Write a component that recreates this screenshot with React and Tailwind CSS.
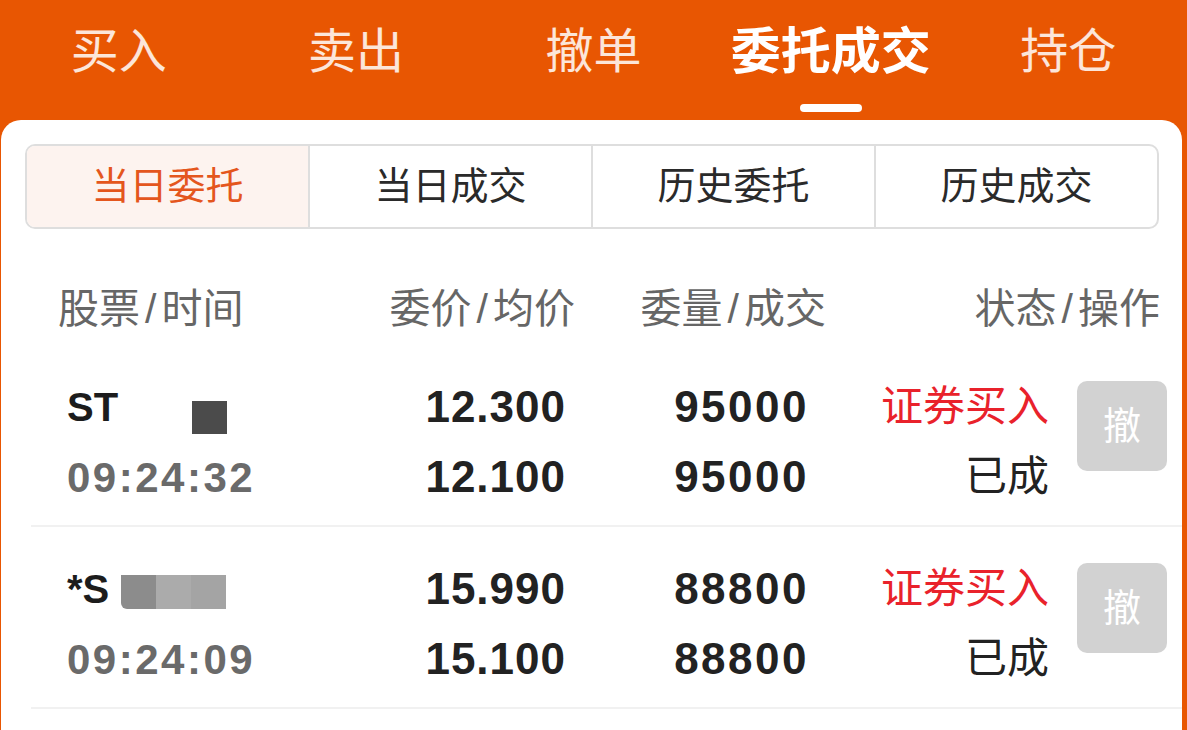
import { useState } from 'react';

const FONT = { fontFamily: '"Liberation Sans", "Noto Sans CJK SC", sans-serif' };

const topTabs = ['买入', '卖出', '撤单', '委托成交', '持仓'];
const subTabs = ['当日委托', '当日成交', '历史委托', '历史成交'];

const orders = [
  { code: 'ST', mask: 'dark', time: '09:24:32', price: '12.300', avg: '12.100', qty: '95000', deal: '95000' },
  { code: '*S', mask: 'light', time: '09:24:09', price: '15.990', avg: '15.100', qty: '88800', deal: '88800' },
];

// 打码块
const Mask = ({ type }) => {
  if (type === 'dark') {
    return <div className="ml-[74px] mt-[14px] w-[35px] h-[33px] bg-[#4b4b4b]" />;
  }
  return (
    <div className="flex mt-[6px] ml-[12px]">
      <div className="w-[35px] h-[34px] bg-[#8c8c8c] rounded-bl-[6px]" />
      <div className="w-[35px] h-[34px] bg-[#ababab]" />
      <div className="w-[35px] h-[34px] bg-[#a4a4a4]" />
    </div>
  );
};

const HeadCell = ({ a, b, className }) => (
  <div className={className}>
    {a}
    <span className="mx-[5px]">/</span>
    {b}
  </div>
);

const OrderRow = ({ item }) => (
  <div className="h-[180px] flex pl-[36px]">
    <div className="w-[264px] pt-[42px]">
      <div className="flex items-start h-[42px]">
        <span className="text-[40px] leading-[40px] font-bold text-[#1c1c1c]">{item.code}</span>
        <Mask type={item.mask} />
      </div>
      <div className="mt-[28px] text-[42px] leading-[42px] text-[#6a6a6a] font-bold tracking-[2.5px]">{item.time}</div>
    </div>
    <div className="w-[235px] pt-[40px] text-right text-[44px] leading-[44px] font-bold text-[#222] tracking-[1px]">
      <div>{item.price}</div>
      <div className="mt-[26px]">{item.avg}</div>
    </div>
    <div className="w-[243px] pt-[40px] text-right text-[44px] leading-[44px] font-bold text-[#222] tracking-[2.5px]">
      <div>{item.qty}</div>
      <div className="mt-[26px]">{item.deal}</div>
    </div>
    <div className="w-[240px] pt-[41px] text-right text-[42px] leading-[42px]">
      <div className="text-[#e9222b]">证券买入</div>
      <div className="mt-[28px] text-[#222]">已成</div>
    </div>
    <div className="pl-[28px] pt-[36px]">
      <button className="w-[90px] h-[90px] rounded-[10px] bg-[#d2d2d2] text-white text-[38px] flex items-center justify-center">
        撤
      </button>
    </div>
  </div>
);

export default function App() {
  const [tab, setTab] = useState(3);
  const [sub, setSub] = useState(0);

  return (
    <div className="w-[1187px] h-[730px] overflow-hidden bg-[#e85602]" style={FONT}>
      {/* 顶部导航 */}
      <div className="h-[120px] flex">
        {topTabs.map((t, i) => (
          <button
            key={t}
            onClick={() => setTab(i)}
            className="w-[237.4px] flex flex-col items-center pt-[25px]"
          >
            <span
              className={
                i === tab
                  ? 'text-[50px] leading-[54px] font-semibold text-white'
                  : 'text-[48px] leading-[54px] text-white/85'
              }
            >
              {t}
            </span>
            {i === tab && <span className="mt-[25px] w-[62px] h-[8px] rounded-full bg-white" />}
          </button>
        ))}
      </div>

      {/* 内容卡片 */}
      <div className="bg-white rounded-t-[20px] ml-[1px] mr-[5px] h-[610px]">
        <div className="pt-[24px] pl-[24px] pr-[23px]">
          <div className="flex h-[85px] border-2 border-[#dedede] rounded-[10px] overflow-hidden">
            {subTabs.map((t, i) => (
              <button
                key={t}
                onClick={() => setSub(i)}
                className={
                  'flex-1 flex items-center justify-center text-[38px] ' +
                  (i > 0 ? 'border-l-2 border-[#dedede] ' : '') +
                  (i === sub ? 'bg-[#fdf3ef] text-[#e4561d]' : 'text-[#2a2a2a]')
                }
              >
                {t}
              </button>
            ))}
          </div>
        </div>

        {/* 表头 */}
        <div className="flex pl-[57px] mt-[56px] h-[50px] items-center text-[41px] text-[#666]">
          <HeadCell a="股票" b="时间" className="w-[272px]" />
          <HeadCell a="委价" b="均价" className="w-[245px] text-right" />
          <HeadCell a="委量" b="成交" className="w-[251px] text-right" />
          <HeadCell a="状态" b="操作" className="w-[334px] text-right" />
        </div>

        {/* 列表 */}
        <div className="mt-[10px]">
          {orders.map((o) => (
            <div key={o.time} className="pl-[30px]">
              <div className="border-b-2 border-[#f1f1f1]">
                <OrderRow item={o} />
              </div>
            </div>
          ))}
        </div>
      </div>
    </div>
  );
}
